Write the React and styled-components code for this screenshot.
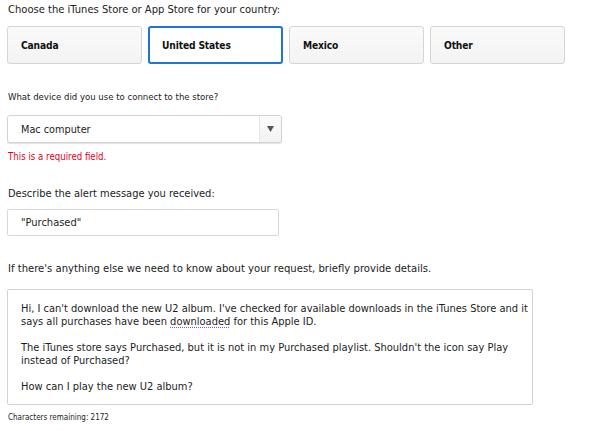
import React from "react";
import styled, { createGlobalStyle } from "styled-components";

const GlobalStyle = createGlobalStyle`
  html, body {
    margin: 0;
    padding: 0;
    background: #ffffff;
  }
  body {
    font-family: "DejaVu Sans Condensed", "DejaVu Sans", "Liberation Sans", sans-serif;
    color: #1d1d1d;
    -webkit-font-smoothing: antialiased;
  }
`;

const Page = styled.div`
  width: 600px;
  height: 431px;
  padding: 3px 0 0 7px;
  box-sizing: border-box;
  display: flex;
  flex-direction: column;
  align-items: flex-start;
`;

const Label = styled.div`
  font-size: ${(p) => p.$size || 11}px;
  line-height: 14px;
  margin-top: ${(p) => p.$gap || 0}px;
  padding-left: 1px;
  color: #222;
  white-space: nowrap;
`;

const CountryRow = styled.div`
  display: grid;
  grid-template-columns: repeat(4, 135px);
  column-gap: 6px;
  margin-top: 9px;
`;

const CountryButton = styled.button`
  height: 38px;
  box-sizing: border-box;
  text-align: left;
  padding: 1px 0 0 ${(p) => (p.$active ? 12 : 13)}px;
  font-family: inherit;
  font-size: 10.2px;
  letter-spacing: -0.15px;
  font-weight: bold;
  color: #111;
  border-radius: 3px;
  cursor: pointer;
  border: ${(p) => (p.$active ? "2px solid #1f74d7" : "1px solid #d5d5d5")};
  background: ${(p) =>
    p.$active ? "#ffffff" : "linear-gradient(#fafafa, #f3f3f3)"};
`;

const SelectBox = styled.div`
  margin-top: 11px;
  width: 275px;
  height: 28px;
  box-sizing: border-box;
  display: flex;
  align-items: stretch;
  border: 1px solid #d3d3d3;
  border-radius: 3px;
  background: #fff;
  box-shadow: 0 1px 1px rgba(0, 0, 0, 0.12);
`;

const SelectValue = styled.div`
  flex: 1;
  display: flex;
  align-items: center;
  padding-left: 13px;
  font-size: 10.8px;
`;

const SelectArrow = styled.div`
  width: 21px;
  border-left: 1px solid #e6e6e6;
  background: linear-gradient(#fbfbfb, #f2f2f2);
  display: flex;
  align-items: center;
  justify-content: center;
  border-radius: 0 3px 3px 0;
`;

const ErrorText = styled.div`
  margin-top: 7px;
  font-size: 9.6px;
  line-height: 14px;
  color: #e5001b;
  padding-left: 1px;
`;

const TextInput = styled.div`
  margin-top: 8px;
  width: 272px;
  height: 27px;
  box-sizing: border-box;
  border: 1px solid #d8d8d8;
  border-radius: 2px;
  display: flex;
  align-items: center;
  padding-left: 13px;
  font-size: 11px;
`;

const TextArea = styled.div`
  margin-top: 13px;
  width: 526px;
  height: 116px;
  box-sizing: border-box;
  border: 1px solid #d3d3d3;
  border-radius: 2px;
  padding: 12px 0 0 13px;
  font-size: 11px;
  line-height: 13px;
  display: flex;
  flex-direction: column;
  gap: 13px;
`;

const Paragraph = styled.div`
  white-space: nowrap;
`;

const Line = styled.div`
  height: 13px;
`;

const Misspelled = styled.span`
  text-decoration: underline dotted #7b5fd0;
  text-underline-offset: 2px;
`;

const Counter = styled.div`
  margin-top: 7px;
  font-size: 8px;
  line-height: 12px;
  padding-left: 1px;
  color: #222;
`;

const countries = ["Canada", "United States", "Mexico", "Other"];

export default function App() {
  return (
    <>
      <GlobalStyle />
      <Page>
        <Label $size={11.1} $gap={0}>
          Choose the iTunes Store or App Store for your country:
        </Label>
        <CountryRow>
          {countries.map((c) => (
            <CountryButton key={c} $active={c === "United States"}>
              {c}
            </CountryButton>
          ))}
        </CountryRow>

        <Label $size={9.5} $gap={26}>
          What device did you use to connect to the store?
        </Label>
        <SelectBox>
          <SelectValue>Mac computer</SelectValue>
          <SelectArrow>
            <svg width="7" height="6" viewBox="0 0 7 6">
              <path d="M0 0 H7 L3.5 6 Z" fill="#555" />
            </svg>
          </SelectArrow>
        </SelectBox>
        <ErrorText>This is a required field.</ErrorText>

        <Label $size={11} $gap={23}>
          Describe the alert message you received:
        </Label>
        <TextInput>"Purchased"</TextInput>

        <Label $size={11.2} $gap={26}>
          If there's anything else we need to know about your request, briefly
          provide details.
        </Label>
        <TextArea>
          <Paragraph>
            <Line>
              Hi, I can't download the new U2 album. I've checked for available
              downloads in the iTunes Store and it
            </Line>
            <Line>
              says all purchases have been <Misspelled>downloaded</Misspelled>{" "}
              for this Apple ID.
            </Line>
          </Paragraph>
          <Paragraph>
            <Line>
              The iTunes store says Purchased, but it is not in my Purchased
              playlist. Shouldn't the icon say Play
            </Line>
            <Line>instead of Purchased?</Line>
          </Paragraph>
          <Paragraph>
            <Line>How can I play the new U2 album?</Line>
          </Paragraph>
        </TextArea>
        <Counter>Characters remaining: 2172</Counter>
      </Page>
    </>
  );
}
